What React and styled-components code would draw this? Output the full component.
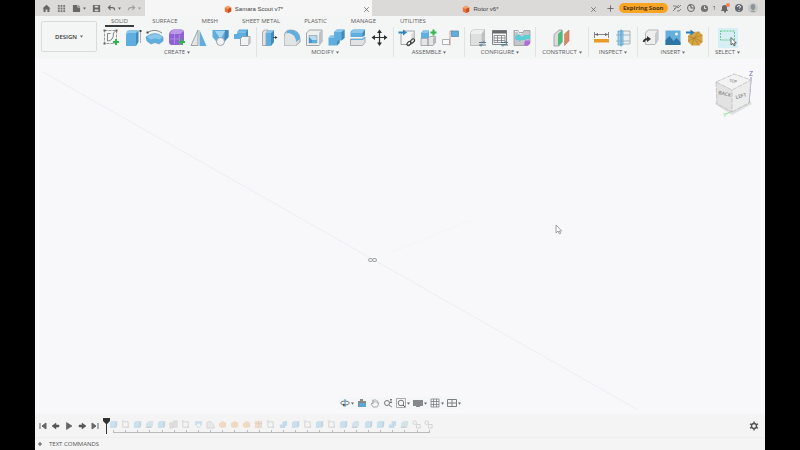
import React from 'react';
import styled, { createGlobalStyle } from 'styled-components';

const GlobalStyle = createGlobalStyle`
  * {
    box-sizing: border-box;
  }

  body {
    margin: 0;
    background: #000000;
    font-family: 'Open Sans', 'Noto Sans', sans-serif;
    font-size: 6px;
    line-height: 8px;
    color: #4a4a4a;
  }

  button {
    padding: 0;
    border: none;
    background: none;
    font: inherit;
    color: inherit;
    cursor: pointer;
  }

  svg {
    display: block;
    flex: none;
  }
`;

const Window = styled.div`
  display: flex;
  flex-direction: column;
  min-height: 100vh;
  margin: 0 35px;
  background: #f4f4f4;
`;

/* Title bar */

const TitleBar = styled.header`
  display: flex;
  align-items: stretch;
  height: 16px;
  background: #dbdad9;
`;

const QuickAccess = styled.div`
  display: flex;
  align-items: center;
  justify-content: space-between;
  width: 110px;
  padding: 0 4px 0 7px;
`;

const QuickButton = styled.button`
  display: flex;
  align-items: center;
  gap: 2px;
  opacity: ${({ $dim }) => ($dim ? 0.5 : 1)};
`;

const DocTab = styled.div`
  display: flex;
  flex: 1;
  align-items: center;
  padding: 2px 1px 0 0;
  background: ${({ $active }) => ($active ? '#f6f6f6' : 'transparent')};
`;

const DocTitle = styled.button`
  display: flex;
  flex: 1;
  align-items: center;
  justify-content: center;
  gap: 3px;
  font-family: 'Liberation Sans', sans-serif;
  color: #3c3c3c;
`;

const Status = styled.div`
  display: flex;
  align-items: center;
  gap: 4px;
  padding: 0 7px;
`;

const Expiring = styled.button`
  height: 10px;
  padding: 0 4px;
  border-radius: 5px;
  background: #f9a423;
  font-weight: 700;
  line-height: 10px;
  color: #4b3413;
`;

const StatusButton = styled.button`
  display: flex;
  align-items: center;
  gap: 4px;
`;

/* Ribbon */

const Ribbon = styled.div`
  display: flex;
  height: 43px;
  padding-left: 6px;
  background: #f4f5f5;
`;

const Workspace = styled.button`
  display: flex;
  align-items: center;
  justify-content: center;
  gap: 3px;
  width: 56px;
  height: 31px;
  margin-top: 5px;
  border: 1px solid #dadada;
  border-radius: 2px;
  font-weight: 600;
  color: #333333;
`;

const RibbonMain = styled.div`
  flex: 1;
  padding-left: 1px;
`;

const RibbonTabs = styled.nav`
  display: flex;
  gap: 12px;
  height: 11px;
  padding-left: 7px;
`;

const RibbonTab = styled.button`
  height: 11px;
  padding: 1px 6px 0;
  border-bottom: 2px solid ${({ $active }) => ($active ? '#3a3d40' : 'transparent')};
  color: #606060;
`;

const Groups = styled.div`
  display: flex;
`;

const Group = styled.section`
  display: flex;
  flex-direction: column;
  align-items: center;
  min-width: ${({ $min }) => $min || 0}px;
  height: 30px;
  padding: 1px 3px 0;
  border-right: 1px solid ${({ $last }) => ($last ? 'transparent' : '#e2e2e2')};
`;

const Tools = styled.div`
  display: flex;
  gap: 2px;
`;

const Tool = styled.button`
  width: 20px;
  height: 20px;
  background: ${({ $selected }) => ($selected ? '#d5eff4' : 'transparent')};
`;

const GroupLabel = styled.button`
  display: flex;
  align-items: center;
  gap: 2px;
  color: #5a5a5a;
`;

/* Canvas */

const Canvas = styled.main`
  position: relative;
  display: flex;
  flex: 1;
  flex-direction: column;
  align-items: center;
  justify-content: flex-end;
  min-height: 240px;
  padding-bottom: 5px;
  background: #f8f7fa;
`;

const Scene = styled.svg`
  position: absolute;
  inset: 0;
  width: 100%;
  height: 100%;
`;

const CubeHolder = styled.div`
  position: absolute;
  top: 9px;
  right: 9px;
`;

const NavBar = styled.div`
  position: relative;
  display: flex;
  align-items: center;
  gap: 3px;
  height: 12px;
  background: #f5f6f7;
`;

const NavButton = styled.button`
  display: flex;
  align-items: center;
  gap: 1px;
`;

/* Timeline and footer */

const Timeline = styled.div`
  display: flex;
  align-items: center;
  height: 23px;
  padding: 0 6px 0 3px;
`;

const Playback = styled.div`
  display: flex;
  gap: 3px;
`;

const Marker = styled.div`
  margin-left: 3px;
`;

const History = styled.div`
  width: 328px;
  margin-left: -3px;
  padding-top: 2px;
`;

const Features = styled.div`
  display: flex;
`;

const Feature = styled.button`
  display: flex;
  flex: 1;
  justify-content: center;
  opacity: 0.28;
`;

const Ticks = styled.div`
  display: flex;
  margin: 1px 5px 0 6px;
  justify-content: space-between;
  border-bottom: 1px solid #b9bcbc;
`;

const Tick = styled.i`
  width: 1px;
  height: 2px;
  background: #b9bcbc;
`;

const Settings = styled.button`
  margin-left: auto;
`;

const TextCommands = styled.footer`
  display: flex;
  align-items: center;
  height: 13px;
  padding: 0 0 0 3px;
  border-top: 1px solid #eeeeee;
`;

const CommandsButton = styled.button`
  display: flex;
  align-items: center;
  gap: 7px;
  color: #555555;
`;

const Caret = () => (
  <svg width="3" height="3" viewBox="0 0 3 3"><path d="M0 .5h3L1.5 2.7z" fill="#666" /></svg>
);

const blue = '#5faee0';
const deep = '#4489b9';
const pale = '#8ac7ea';
const light = '#e4e5e6';
const line = '#8d9194';

const Plus = ({ x, y }) => <path d={`M${x - 3} ${y}h6M${x} ${y - 3}v6`} stroke="#2fb74c" strokeWidth="2" />;

const Sliders = () => (
  <g stroke="#4c5a63" strokeWidth=".8">
    <path d="M11 14.500h7M11 17h7" />
    <path d="M16 13v2.500M13 16v2.500" stroke="#348cc2" strokeWidth="1" />
  </g>
);

const art = {
  sketch: (
    <>
      <path d="M3.500 2.500h12v13h-12z" stroke={line} strokeWidth=".9" strokeDasharray="3 1" />
      <path d="M6.500 13V5.500M6.500 13q6 0 6-8M6.500 5.500h3M12.500 5l2-2" stroke="#74797d" strokeWidth=".9" />
      <path d="M2.500 1.500h2v2h-2zM14.500 1.500h2v2h-2zM2.500 14.500h2v2h-2z" fill="#666" />
      <Plus x={15} y={14} />
    </>
  ),
  extrude: (
    <>
      <path d="M3 6q0-4 4-4h8l-2 3H6q-3 0-3 3z" fill={pale} />
      <path d="M3 7q0-2 2-2h8v13H3z" fill={blue} />
      <path d="M13 5l2.500-3v12L13 18z" fill={deep} />
      <path d="M17.500 3v12" stroke="#999" strokeWidth=".8" />
      <path d="M16.500 2h2v2h-2z" fill="#444" />
    </>
  ),
  revolve: (
    <>
      <path d="M1 9Q10 2 18 9v4l-4 3q-4-3-8 0l-4-3z" fill={blue} stroke="#4d91bc" strokeWidth=".6" />
      <path d="M2 9q8-6 16 0l-4 2.500q-4-2-8 0z" fill={pale} />
      <path d="M2.500 4.500Q10 0 17 5" stroke="#777" strokeWidth=".9" />
      <path d="M1.500 3.500h2v2h-2z" fill="#444" />
    </>
  ),
  form: (
    <>
      <path d="M6 1.500h8q3 0 3 3V13q-1 4-5 4H5q-3 0-3-3V7q0-4 4-5.500z" fill="#9063d2" />
      <path d="M6 1.500h8q2 0 2.500 1.500l-3 3H3Q4 2.500 6 1.500z" fill="#bb9ae9" />
      <path d="M3 11h9M7.500 6v10M12.500 7v9" stroke="#b799e6" strokeWidth=".7" />
      <Plus x={15} y={14} />
    </>
  ),
  mirror: (
    <>
      <path d="M9 2v15.500H2z" fill={light} stroke={line} strokeWidth=".8" />
      <path d="M10.500 2v16H17.500z" fill={blue} />
    </>
  ),
  hole: (
    <>
      <path d="M1.500 2h16v7l-5 6h-6l-5-6z" fill={blue} />
      <path d="M14 2h3.500v7L13 14z" fill={deep} />
      <path d="M4 3h10l-4.500 8z" fill="#a7d7f0" />
      <circle cx="9.500" cy="13.500" r="4" fill="#f0f2f3" stroke={line} strokeWidth=".8" />
    </>
  ),
  pattern: (
    <>
      <path d="M4 4l2-2.500h9V8l-2 3H1V6h3z" fill={blue} />
      <path d="M13 4l2-2.500V8l-2 3z" fill={deep} />
      <path d="M4 4h9" stroke="#a7d7f0" strokeWidth=".8" />
      <path d="M7.500 10.500l2-2H17v6.500l-2 2.500H7.500z" fill="#f1f2f2" stroke={line} strokeWidth=".8" />
      <path d="M15 10.500l2-2V15l-2 2.500z" fill="#c4c7c9" />
    </>
  ),
  pull: (
    <>
      <path d="M2.500 5q0-3 3-3H8L6 5v12.500H2.500z" fill="#e3e4e5" stroke={line} strokeWidth=".7" />
      <path d="M6 5l2-3h6l-3 3z" fill={pale} />
      <path d="M6 5h5v13H6z" fill={blue} />
      <path d="M11 5l3-3v12l-3 4z" fill={deep} />
      <path d="M13 9.500h3" stroke="#333" strokeWidth=".8" />
      <path d="M15 8l2.500 1.500L15 11z" fill="#333" />
    </>
  ),
  fillet: (
    <>
      <path d="M2.500 17.500V8q0-6 6-6 9 0 9.500 9v3l-4 3.500z" fill="#dcddde" stroke={line} strokeWidth=".8" />
      <path d="M8 2q9 0 10 9l-4 3q0-6-6-8-3-1-4 0 1-4 4-4z" fill={blue} />
      <path d="M2.500 17.500V8q1-3 4-3 7 1 7.500 9v3.500z" fill="#e3e4e4" />
    </>
  ),
  shell: (
    <>
      <path d="M2.500 5l3-3H18v11.500L15 17.500H2.500z" fill="#eeefef" stroke={line} strokeWidth=".8" />
      <path d="M15 5l3-3v11.500l-3 4z" fill="#bfc2c4" />
      <path d="M5 7.500h8v7.500H5z" fill="#b5dcf0" stroke={line} strokeWidth=".6" />
      <path d="M5 9l3 3v3H5z" fill="#3f98d0" />
      <path d="M8 12h5v3H8z" fill={blue} />
    </>
  ),
  combine: (
    <>
      <path d="M8 4l3-2.500h7.500V10l-3 2.500h-2V15l-2.500 2.500H2.500V10l2-2.500H8z" fill={blue} />
      <path d="M15.500 4l3-2.500V10l-3 2.500zM11 13.500l2.500-2V15L11 17.500z" fill={deep} />
      <path d="M8 4l3-2.500h7.500L15.500 4zM2.500 10l2-2.500H8V10z" fill={pale} />
    </>
  ),
  split: (
    <>
      <path d="M2.500 5q0-3 3-3.500H17V7l-2.500 2h-12z" fill={blue} />
      <path d="M2.500 5l3-3.500H17L14.500 5z" fill={pale} />
      <path d="M14.500 5L17 1.500V7l-2.500 2z" fill={deep} />
      <path d="M2.500 11h12L17 9v5.500l-2.500 3h-12z" fill="#e1e2e3" stroke={line} strokeWidth=".7" />
      <path d="M3 11.500h11.500L17 9.500" stroke={blue} strokeWidth="1.200" />
    </>
  ),
  move: (
    <>
      <path d="M9.500 4v12M4 9.500h11" stroke="#2d2f31" strokeWidth="1.200" />
      <path d="M9.500 1.500L12 5H7zM9.500 18L12 14.500H7zM1.500 9.500L5 7v5zM17.500 9.500L14 7v5z" fill="#2d2f31" />
    </>
  ),
  joinPart: (
    <>
      <path d="M4 6l3-3h10.500v10l-3 3.500H4z" fill="#f6f6f6" stroke={line} strokeWidth=".8" />
      <path d="M14.500 6l3-3v10l-3 3.500z" fill="#d5d6d7" />
      <path d="M1.500 4.500h5" stroke="#2c82bd" strokeWidth="2" />
      <path d="M6 1.500l4 3-4 3z" fill="#2c82bd" />
      <ellipse cx="12" cy="15.500" rx="2.500" ry="1.500" transform="rotate(-45 12 15.500)" stroke="#333" />
      <ellipse cx="15.500" cy="13" rx="2.500" ry="1.500" transform="rotate(-45 15.500 13)" stroke="#333" />
    </>
  ),
  component: (
    <>
      <path d="M2 5l2-2.500h6V10H2z" fill={blue} />
      <path d="M2 5l2-2.500h6L8.500 5z" fill={pale} />
      <path d="M2 10.500h7v7H2zM9 10.500l2-2h5.500v6L14 17.500H9z" fill={light} stroke={line} strokeWidth=".7" />
      <path d="M14 10.500l2.500-2v6l-2.500 3z" fill="#b7babd" />
      <Plus x={14.500} y={4.500} />
    </>
  ),
  joint: (
    <>
      <path d="M1.500 11.500h7v5h-7z" fill="#fafafa" stroke="#999da0" strokeWidth=".8" />
      <path d="M9 17.500V3h3" stroke="#c58878" strokeWidth=".8" />
      <path d="M10.500 3h7v5.500h-7z" fill={blue} stroke="#5c8dac" strokeWidth=".8" />
    </>
  ),
  config: (
    <>
      <path d="M2.500 6q0-4 4-4.500h10V13L14 17.500H2.500z" fill="#dedfdf" stroke="#a9acae" strokeWidth=".7" />
      <path d="M2.500 6q1-4 4-4.500h10L13.500 6z" fill="#eeeeee" />
      <path d="M13.500 6l3-4.500V13l-3 3z" fill="#bec0c1" />
      <Sliders />
    </>
  ),
  table: (
    <>
      <path d="M2.500 2.500h14v14h-14z" fill="#fafafa" stroke="#666b70" strokeWidth=".8" />
      <path d="M2.500 2.500h14v3h-14z" fill="#64696d" />
      <path d="M4 7.500h11v7H4zM4 10h11M4 12.500h11M7.500 7.500v7M11.500 7.500v7" stroke="#777c80" strokeWidth=".8" />
      <Sliders />
    </>
  ),
  rules: (
    <>
      <path d="M2 2.500h4l1 2h4l1-2h6v12.500l-2 2.500H2z" fill="#c3c7c9" stroke={line} strokeWidth=".7" />
      <path d="M4 7h4l1 1.500h2L12 7h6v4h-3l-2 1H9l-1 2-2-2H4l-1-2z" fill="#5ccdd4" />
      <path d="M13 12.500h5v3l-2 2h-4z" fill="#b06bda" />
      <path d="M3 3.500h3l1 2h3" stroke="#edf0f1" />
    </>
  ),
  plane: (
    <>
      <path d="M2 6.500l5-4.500h3v12l-3 4H2z" fill="#d9dbdc" stroke={line} strokeWidth=".7" />
      <path d="M6 6l4.500-4v12L6 18z" fill="#50ba78" />
      <path d="M12.500 6L17 2v11l-4.500 4.500z" fill="#d98764" stroke="#c2775a" strokeWidth=".6" />
    </>
  ),
  measure: (
    <>
      <path d="M2.500 4v6M16.500 4v6M3 6.500h13" stroke="#777c80" strokeWidth=".9" />
      <path d="M3 6.500L6 5v3zM16 6.500L13 5v3z" fill="#63696d" />
      <path d="M2 11h15v3.500H2z" fill="#e99b28" />
    </>
  ),
  section: (
    <>
      <path d="M7 3h9v13H7z" fill="#eceff0" stroke="#a0a5a9" strokeWidth=".8" />
      <path d="M4 3h5v14H4z" fill="#a2d1eb" stroke="#5da6d1" strokeWidth=".8" />
      <path d="M2 7h14M2 13h14" stroke="#8ba9bb" strokeWidth=".8" />
      <path d="M7 1.500v17" stroke="#4d9acb" />
    </>
  ),
  insertPart: (
    <>
      <path d="M4.500 6q0-3 3-4H17v10l-3 4.500H4.500z" fill="#eeeeef" stroke="#a5a8aa" strokeWidth=".8" />
      <path d="M14 6l3-4v10l-3 4.500z" fill="#c5c7c9" />
      <path d="M2.500 14q1-3 4-3" stroke="#333" strokeWidth="1.800" />
      <path d="M6 8l4 3-4 3z" fill="#333" />
    </>
  ),
  image: (
    <>
      <path d="M2.500 2.500h15v14.500h-15z" fill="#65afdc" />
      <path d="M2.500 12l4-4 4 5 3-3 4 4v3h-15z" fill="#2f75a5" />
      <circle cx="13.500" cy="6" r="1.500" fill="#e9f6fc" />
    </>
  ),
  mesh: (
    <>
      <path d="M3 8l4-4 7-.500 3.500 3.500V14L14 17.500H7L3 14z" fill="#d6a542" />
      <path d="M3 8l6 2 5-6.500M9 10l-2 7.500M9 10l5 7.500M3 13l6-3 8.500 4M17.500 7L9 10" stroke="#a5792b" strokeWidth=".6" />
      <path d="M1 4.500h5" stroke="#277fbb" strokeWidth="2" />
      <path d="M5.500 1.500l4 3-4 3z" fill="#277fbb" />
    </>
  ),
  select: (
    <>
      <path d="M2.500 3h14v9h-14z" stroke="#55bf78" strokeWidth=".9" strokeDasharray="2 1" />
      <path d="M13 9.500V17l1.800-1.600 1.200 2.500 1.200-.6-1.200-2.300h2.300z" fill="#fff" stroke="#444" strokeWidth=".8" />
    </>
  ),
};

const smallArt = {
  home: <path d="M0.500 5L5 .8 9.500 5H8.300v4H6V6H4v3H1.700V5z" fill="#666" />,
  grid: <path d="M1 1h2v2H1zM4 1h2v2H4zM7 1h2v2H7zM1 4h2v2H1zM4 4h2v2H4zM7 4h2v2H7zM1 7h2v2H1zM4 7h2v2H4zM7 7h2v2H7z" fill="#747474" />,
  file: <path d="M1 1h5v3h3v5H1zM7 1l2 2H7z" fill="#686868" />,
  save: <path d="M1 1h8v8H1zM3 2v2h4V2zM3 6v2h4V6z" fill="#686868" fillRule="evenodd" />,
  undo: <path d="M4 1.500L1.500 4 4 6.500M2 4h4q2.500 0 2.500 3" stroke="#666" strokeWidth="1.200" />,
  redo: <path d="M6 1.500L8.500 4 6 6.500M8 4H4Q1.500 4 1.500 7" stroke="#666" strokeWidth="1.200" />,
  close: <path d="M2.500 2.500l5 5M7.500 2.500l-5 5" stroke="#666" strokeWidth=".9" />,
  add: <path d="M5 1.500v7M1.500 5h7" stroke="#666" />,
  doc: (
    <>
      <path d="M1 3l4-2 4 2v5L5 10 1 8z" fill="#e8743b" />
      <path d="M1 3l4 2 4-2-4-2z" fill="#f5a26c" />
      <path d="M5 5l4-2v5l-4 2z" fill="#c9501f" />
    </>
  ),
  extensions: <path d="M1 3h3l2 2 3-3M1 8l3-3m1 3h2l2-2M2 6l5-4" stroke="#777" strokeWidth=".9" />,
  online: <><circle cx="5" cy="5" r="3.500" stroke="#666" /><path d="M5 3v2h3M3 2l2 1" stroke="#666" strokeWidth="1.200" /></>,
  jobs: <><circle cx="5" cy="5" r="4" fill="#737373" /><path d="M5 2.500V5h2" stroke="#eee" /></>,
  bell: <><path d="M1 8l1-2V4q0-2 3-2 2 0 2 2v2l1 2zM4 8h2v1.500H4z" fill="#666" /><circle cx="8" cy="2" r="2" fill="#f08050" /></>,
  help: <><circle cx="5" cy="5" r="4" fill="#636870" /><path d="M3.500 4q0-1.500 1.500-1.500T6.500 4Q6 5 5 5.500M5 7v1" stroke="#eee" /></>,
  user: <><circle cx="5" cy="5" r="5" fill="#c6c8c9" /><ellipse cx="5" cy="4" rx="2.300" ry="3" fill="#8e9295" /><path d="M2 9q3-3 6 0z" fill="#999da0" /></>,
  orbit: <><ellipse cx="5" cy="5" rx="4.300" ry="2" stroke="#666" strokeWidth=".9" /><path d="M5 1v8" stroke="#4d9acb" /><path d="M3 5.500L5.500 7 3 8.500z" fill="#555" /></>,
  look: <><path d="M1 3h2V1h3v2h3v6H1z" fill="#888" /><path d="M2 5h7v4H2z" fill="#5ca8d5" /></>,
  pan: <path d="M3 9L1 6l1-1 1 1V2m0 3V1.500m2 3V1m2 4V2m1 4V3.500M8.500 5L8 8 7 9H3" stroke="#999" strokeWidth=".8" />,
  zoom: <><circle cx="4" cy="5" r="2.500" stroke="#777" /><path d="M6 7l3 2M8 1v4M7 2l1-1 1 1M7 4l1 1 1-1" stroke="#666" strokeWidth=".8" /></>,
  fit: <><path d="M.5 .5h9v9h-9z" stroke="#999" strokeWidth=".8" /><circle cx="5" cy="5" r="2.800" stroke="#777" /><path d="M7 7l2 2" stroke="#555" /></>,
  display: <path d="M0 2h10v6H7v1H3V8H0z" fill="#85898c" />,
  cells: <path d="M1 1h8v8H1zM3.500 1v8M6.500 1v8M1 3.500h8M1 6.500h8" stroke="#7c8083" strokeWidth=".8" />,
  views: <path d="M.5 1.500h9v7h-9zM5 1.500v7M.5 5h9" stroke="#7c8083" />,
  first: <path d="M2 2v6M8 2L4 5l4 3z" stroke="#666" fill="#666" strokeWidth="1" />,
  back: <path d="M1 5l4-3v2h3v2H5v2z" fill="#555" stroke="#555" strokeWidth=".5" />,
  play: <path d="M2.500 1.500l5.500 3.500-5.500 3.500z" fill="#666" stroke="#555" strokeWidth=".6" />,
  forward: <path d="M9 5L5 2v2H2v2h3v2z" fill="#555" stroke="#555" strokeWidth=".5" />,
  last: <path d="M8 2v6M2 2l4 3-4 3z" stroke="#666" fill="#666" />,
  gear: (
    <>
      <circle cx="5" cy="5" r="2.500" stroke="#555" strokeWidth="1.400" />
      <path d="M5 .5v2M5 7.500v2M1 2.800l2 1M7 6.200l2 1M9 2.800l-2 1M3 6.200l-2 1" stroke="#555" strokeWidth="1.400" />
    </>
  ),
  solid: <><path d="M1 3l2-2h6v6L7 9H1z" fill="#62aeda" /><path d="M7 3v6l2-2V1z" fill="#49809e" /></>,
  plain: <path d="M2 2h6v6H2zM1 1h2M7 8h2" stroke="#777c80" />,
  body: <><path d="M1 4l3-3h5v5L7 9H1z" fill="#85b9d3" /><path d="M1 8h6" stroke="#555" /></>,
  copies: <path d="M1 3h3v6H1zM5 1h4v7H5z" fill="#aaa" stroke="#777" strokeWidth=".7" />,
  cut: <><path d="M1 1h8v4L6 9H4L1 5z" fill="#6ab0d7" /><circle cx="5" cy="6" r="2" fill="#e9eff2" /></>,
  bevel: <path d="M1 9V3q5-4 8 4v2z" fill="#c9d2d7" stroke="#9a7c80" />,
  amber: <path d="M1 4l4-3 4 2v5L4 9 1 7z" fill="#e2964a" />,
  mosaic: <><path d="M1 1h8v8H1z" fill="#e0a468" /><path d="M1 4h8M5 1v8" stroke="#987755" /></>,
  merge: <path d="M1 5h3V2l2-1h3v5L7 7v2H1z" fill="#4d9ccd" />,
  link: <><circle cx="3" cy="3" r="2" stroke="#777" /><path d="M5 5h4v4H5z" stroke="#777" /></>,
};

const ToolIcon = ({ name }) => (
  <svg width="20" height="20" viewBox="0 0 20 20" fill="none">{art[name]}</svg>
);

const SmallIcon = ({ name, size = 9 }) => (
  <svg width={size} height={size} viewBox="0 0 10 10" fill="none">{smallArt[name]}</svg>
);

const quick = [
  { icon: 'home', label: 'Home' },
  { icon: 'grid', label: 'Data panel' },
  { icon: 'file', label: 'File', menu: true },
  { icon: 'save', label: 'Save' },
  { icon: 'undo', label: 'Undo', menu: true },
  { icon: 'redo', label: 'Redo', menu: true, dim: true },
];

const documents = [
  { title: 'Samara Scout v7*', active: true },
  { title: 'Rotor v6*' },
];

const tabs = ['SOLID', 'SURFACE', 'MESH', 'SHEET METAL', 'PLASTIC', 'MANAGE', 'UTILITIES'];

const groups = [
  { label: 'CREATE', tools: ['sketch', 'extrude', 'revolve', 'form', 'mirror', 'hole', 'pattern'] },
  { label: 'MODIFY', tools: ['pull', 'fillet', 'shell', 'combine', 'split', 'move'] },
  { label: 'ASSEMBLE', tools: ['joinPart', 'component', 'joint'] },
  { label: 'CONFIGURE', tools: ['config', 'table', 'rules'] },
  { label: 'CONSTRUCT', tools: ['plane'], min: 53 },
  { label: 'INSPECT', tools: ['measure', 'section'] },
  { label: 'INSERT', tools: ['insertPart', 'image', 'mesh'] },
  { label: 'SELECT', tools: ['select'], min: 38 },
];

const navTools = [
  { icon: 'orbit', menu: true },
  { icon: 'look' },
  { icon: 'pan' },
  { icon: 'zoom' },
  { icon: 'fit', menu: true },
  { icon: 'display', menu: true },
  { icon: 'cells', menu: true },
  { icon: 'views', menu: true },
];

const features = [
  'solid', 'plain', 'solid', 'body', 'solid', 'copies', 'plain', 'cut', 'bevel',
  'amber', 'amber', 'amber', 'mosaic', 'plain', 'merge', 'solid', 'plain', 'solid',
  'plain', 'solid', 'body', 'solid', 'solid', 'merge', 'body', 'link', 'link',
];

const ViewCube = () => (
  <svg width="42" height="50" viewBox="0 0 42 50" fill="none" role="img" aria-label="View cube">
    <path d="M1 36l17 11 20-11-3-5H3z" fill="#e0e0e3" />
    <path d="M12 46L35 35" stroke="#8fdf8e" />
    <path d="M37 9v3l-2 23" stroke="#8b8bd3" />
    <path d="M2 14l18-8 17 6-19 10z" fill="#f3f3f3" />
    <path d="M2 14l16 8v22L3 36z" fill="#e2e2e3" />
    <path d="M18 22l19-10-2 23-17 9z" fill="#ececec" />
    <path d="M2 14l18-8 17 6-19 10zM2 14l1 22 15 8V22M18 44l17-9 2-23" stroke="#bcbcbc" strokeWidth=".8" strokeDasharray="5 1" />
    <g fontFamily="Open Sans" fontWeight="600" fill="#858585">
      <text x="4" y="26" fontSize="5" transform="rotate(14 4 26)">BACK</text>
      <text x="22" y="31" fontSize="5" transform="rotate(-14 22 31)">LEFT</text>
      <text x="15" y="14" fontSize="4" transform="rotate(8 15 14)">TOP</text>
    </g>
    <text x="35" y="8" fontFamily="Open Sans" fontSize="7" fill="#6c6cbb">Z</text>
    <text x="9" y="49" fontFamily="Open Sans" fontSize="6" fill="#71db73">Y</text>
  </svg>
);

function App() {
  return (
    <>
      <GlobalStyle />
      <Window>
        <TitleBar>
          <QuickAccess>
            {quick.map(({ icon, label, menu, dim }) => (
              <QuickButton key={icon} aria-label={label} $dim={dim}>
                <SmallIcon name={icon} />
                {menu && <Caret />}
              </QuickButton>
            ))}
          </QuickAccess>
          {documents.map(({ title, active }) => (
            <DocTab key={title} $active={active}>
              <DocTitle><SmallIcon name="doc" size={8} />{title}</DocTitle>
              <button aria-label={`Close ${title}`}><SmallIcon name="close" /></button>
            </DocTab>
          ))}
          <Status>
            <StatusButton aria-label="New design"><SmallIcon name="add" /></StatusButton>
            <Expiring>Expiring Soon</Expiring>
            <StatusButton aria-label="Extensions"><SmallIcon name="extensions" size={10} /></StatusButton>
            <StatusButton aria-label="Online status"><SmallIcon name="online" size={10} /></StatusButton>
            <StatusButton aria-label="Job status"><SmallIcon name="jobs" />1</StatusButton>
            <StatusButton aria-label="Notifications"><SmallIcon name="bell" size={10} /></StatusButton>
            <StatusButton aria-label="Help"><SmallIcon name="help" size={10} /></StatusButton>
            <StatusButton aria-label="Account"><SmallIcon name="user" size={10} /></StatusButton>
          </Status>
        </TitleBar>

        <Ribbon>
          <Workspace>DESIGN <Caret /></Workspace>
          <RibbonMain>
            <RibbonTabs>
              {tabs.map((tab) => (
                <RibbonTab key={tab} $active={tab === 'SOLID'}>{tab}</RibbonTab>
              ))}
            </RibbonTabs>
            <Groups>
              {groups.map(({ label, tools, min }) => (
                <Group key={label} $min={min} $last={label === 'SELECT'}>
                  <Tools>
                    {tools.map((tool) => (
                      <Tool key={tool} aria-label={tool} $selected={tool === 'select'}>
                        <ToolIcon name={tool} />
                      </Tool>
                    ))}
                  </Tools>
                  <GroupLabel>{label}<Caret /></GroupLabel>
                </Group>
              ))}
            </Groups>
          </RibbonMain>
        </Ribbon>

        <Canvas>
          <Scene viewBox="0 0 730 355" preserveAspectRatio="xMidYMid slice" fill="none">
            <path d="M8 13L603 351" stroke="#ebeff1" />
            <path d="M358 193l77-32" stroke="#f3f7ec" />
            <rect x="333.500" y="199.500" width="4" height="3" rx="1.500" stroke="#a0a5a5" />
            <rect x="337.500" y="199.500" width="4" height="3" rx="1.500" stroke="#a0a5a5" />
            <path d="M521 166v8l2-2 1.500 3 1.200-.7-1.300-2.300h2.200z" fill="#fff" stroke="#888" strokeWidth=".8" />
          </Scene>
          <CubeHolder><ViewCube /></CubeHolder>
          <NavBar>
            {navTools.map(({ icon, menu }) => (
              <NavButton key={icon} aria-label={icon}>
                <SmallIcon name={icon} size={10} />
                {menu && <Caret />}
              </NavButton>
            ))}
          </NavBar>
        </Canvas>

        <Timeline>
          <Playback>
            {['first', 'back', 'play', 'forward', 'last'].map((name) => (
              <button key={name} aria-label={name}><SmallIcon name={name} size={10} /></button>
            ))}
          </Playback>
          <Marker>
            <svg width="7" height="17" viewBox="0 0 7 17"><path d="M0 1h7v3L4 7v10H3V7L0 4z" fill="#333" /></svg>
          </Marker>
          <History>
            <Features>
              {features.map((name, i) => (
                <Feature key={i} aria-label={`${name} ${i + 1}`}><SmallIcon name={name} /></Feature>
              ))}
            </Features>
            <Ticks>
              {features.map((_, i) => <Tick key={i} />)}
            </Ticks>
          </History>
          <Settings aria-label="Timeline settings"><SmallIcon name="gear" size={10} /></Settings>
        </Timeline>
        <TextCommands>
          <CommandsButton>
            <svg width="4" height="4" viewBox="0 0 4 4"><path d="M2 0v4M0 2h4" stroke="#555" /></svg>
            TEXT COMMANDS
          </CommandsButton>
        </TextCommands>
      </Window>
    </>
  );
}

export default App;
